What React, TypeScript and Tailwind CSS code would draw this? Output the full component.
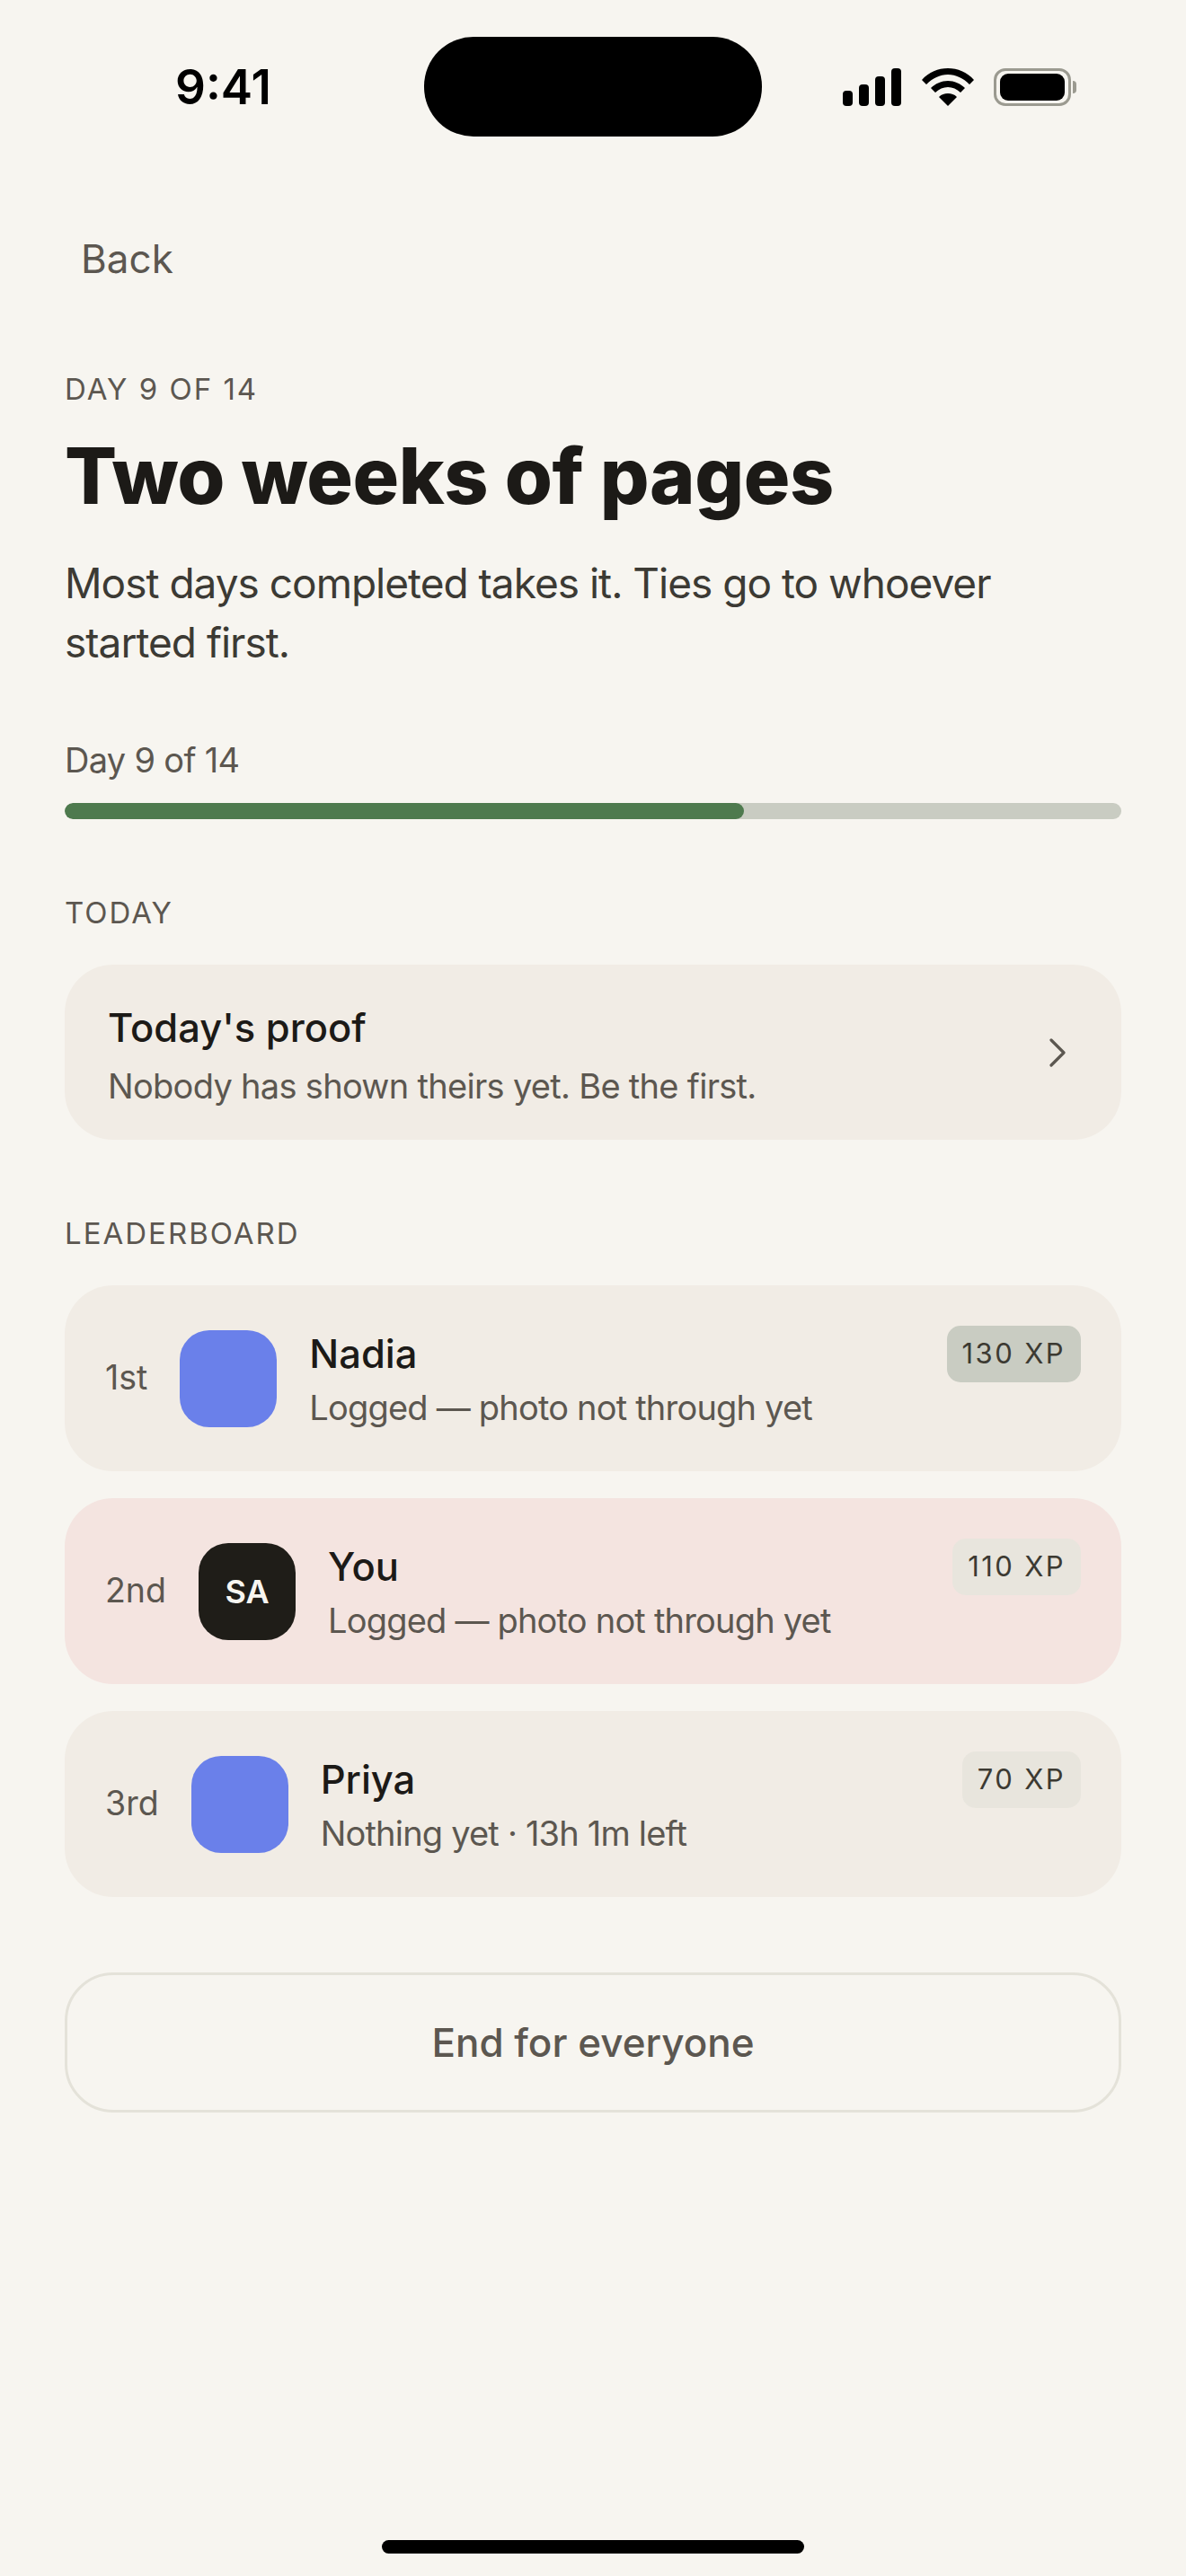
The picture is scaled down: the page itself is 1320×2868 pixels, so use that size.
const sans = "font-['Inter','Noto_Sans',sans-serif]";

const players = [
  { rank: "1st", name: "Nadia", note: "Logged — photo not through yet", xp: "130 XP", you: false, lead: true },
  { rank: "2nd", name: "You", note: "Logged — photo not through yet", xp: "110 XP", you: true, lead: false },
  { rank: "3rd", name: "Priya", note: "Nothing yet · 13h 1m left", xp: "70 XP", you: false, lead: false },
];

function StatusBar() {
  return (
    <div className="mt-[41px] flex h-[111px] items-center pl-[195px] pr-[122px]">
      <span className="w-[277px] pt-[2px] text-[53px] leading-none font-semibold text-black">9:41</span>
      <div className="h-[111px] w-[376px] rounded-[55px] bg-black" />
      <div className="flex flex-1 items-center justify-end gap-[22px]">
        <svg width="66" height="42" viewBox="0 0 66 42" fill="black">
          <rect x="0" y="25" width="11" height="17" rx="4" />
          <rect x="18" y="18" width="11" height="24" rx="4" />
          <rect x="36" y="9" width="11" height="33" rx="4" />
          <rect x="54" y="0" width="11" height="42" rx="4" />
        </svg>
        <svg width="58" height="42" viewBox="0 0 58 42" fill="black">
          <path d="M29 0C18 0 8 4 0 13l5 5C12 11 20 7 29 7s17 4 24 11l5-5C50 4 40 0 29 0Z" />
          <path d="M29 14c-7 0-14 3-19 8l5 5c4-4 9-6 14-6s10 2 14 6l5-5c-5-5-12-8-19-8Z" />
          <path d="M29 28c-4 0-7 1-10 4l10 10 10-10c-3-3-6-4-10-4Z" />
        </svg>
        <div className="flex items-center">
          <div className="flex h-[42px] w-[86px] items-center justify-center rounded-[13px] border-[3px] border-[#9b9a90]">
            <div className="h-[30px] w-[72px] rounded-[9px] bg-black" />
          </div>
          <div className="ml-[2px] h-[14px] w-[4px] rounded-r-full bg-[#9b9a90]" />
        </div>
      </div>
    </div>
  );
}

function Label({ children }: { children: string }) {
  return <div className="text-[33px] leading-[40px] tracking-[2px] text-[#5c5750] uppercase">{children}</div>;
}

function PlayerRow({ rank, name, note, xp, you, lead }: (typeof players)[number]) {
  return (
    <div className={`flex h-[207px] items-start rounded-[54px] px-[45px] ${you ? "bg-[#f4e4e0]" : "bg-[#f1ece5]"}`}>
      <div className="flex h-full items-center gap-[36px]">
        <span className="text-[37.5px] text-[#5c5750]">{rank}</span>
        <div className={`flex h-[108px] w-[108px] items-center justify-center rounded-[33px] ${you ? "bg-[#1f1d18]" : "bg-[#6a80ea]"}`}>
          {you && <span className="text-[36px] font-semibold text-[#f7f5f0]">SA</span>}
        </div>
      </div>
      <div className="ml-[36px] flex h-full flex-1 flex-col justify-center">
        <div className="text-[43.5px] leading-[62px] font-[450] text-[#1c1a17]">{name}</div>
        <div className="mt-[2px] text-[38px] leading-[54px] tracking-[-0.8px] text-[#5c5750]">{note}</div>
      </div>
      <div className={`mt-[45px] flex h-[63px] items-center rounded-[15px] px-[17px] text-[31px] tracking-[2.4px] text-[#3c3a32] ${lead ? "bg-[#c9ccc2]" : "bg-[#e8e5dd]"}`}>
        {xp}
      </div>
    </div>
  );
}

export default function App() {
  return (
    <div className={`${sans} flex min-h-[2868px] flex-col bg-[#f7f5f0]`}>
      <StatusBar />
      <div className="px-[72px]">
        <div className="mt-[106px] pl-[18px] text-[44px] leading-[60px] text-[#5c5750]">Back</div>

        <div className="mt-[95px]">
          <Label>Day 9 of 14</Label>
        </div>
        <h1 className="mt-[27px] text-[86px] leading-[100px] font-extrabold tracking-[-0.4px] text-[#1c1a17]">Two weeks of pages</h1>
        <p className="mt-[36px] text-[46px] leading-[66px] tracking-[-1px] text-[#3c3a34]">
          Most days completed takes it. Ties go to whoever started first.
        </p>

        <div className="mt-[74px] text-[38px] leading-[48px] tracking-[-0.7px] text-[#5c5750]">Day 9 of 14</div>
        <div className="mt-[24px] h-[18px] overflow-hidden rounded-full bg-[#c9ccc2]">
          <div className="h-full w-[64.3%] rounded-full bg-[#4e7a4e]" />
        </div>

        <div className="mt-[84px]">
          <Label>Today</Label>
        </div>
        <div className="mt-[38px] flex h-[195px] items-center justify-between rounded-[54px] bg-[#f1ece5] pr-[62px] pl-[48px]">
          <div className="pt-[6px]">
            <div className="text-[43.5px] leading-[60px] font-[450] text-[#1c1a17]">Today's proof</div>
            <div className="mt-[8px] text-[38px] leading-[54px] tracking-[-0.7px] text-[#5c5750]">Nobody has shown theirs yet. Be the first.</div>
          </div>
          <svg width="18" height="32" viewBox="0 0 18 32" fill="none" stroke="#5c5750" strokeWidth="3.2" strokeLinecap="round" strokeLinejoin="round">
            <path d="M2 2 16 16 2 30" />
          </svg>
        </div>

        <div className="mt-[84px]">
          <Label>Leaderboard</Label>
        </div>
        <div className="mt-[38px] flex flex-col gap-[30px]">
          {players.map((p) => (
            <PlayerRow key={p.name} {...p} />
          ))}
        </div>

        <div className="mt-[84px] flex h-[156px] items-center justify-center rounded-[54px] border-[3px] border-[#e4e2d9] text-[44px] font-[450] text-[#5c5750]">
          End for everyone
        </div>
      </div>
      <div className="mt-auto mb-[25px] flex justify-center">
        <div className="h-[15px] w-[470px] rounded-full bg-black" />
      </div>
    </div>
  );
}
